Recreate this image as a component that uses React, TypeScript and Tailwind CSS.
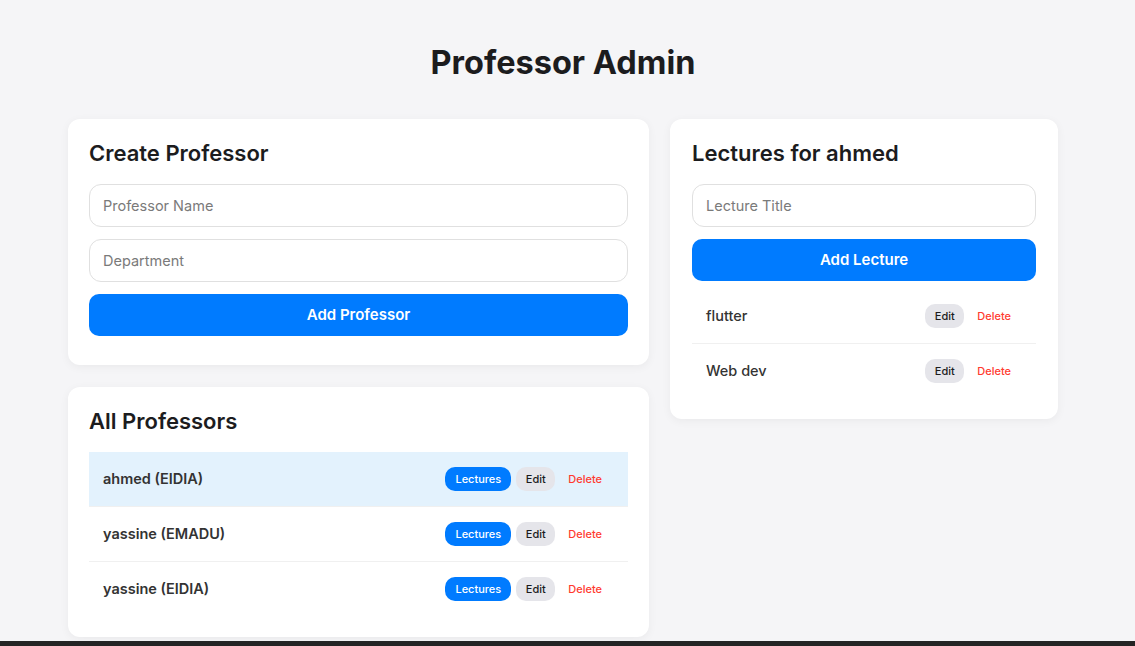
import { useState } from "react";

type Professor = { id: number; name: string; department: string };
type Lecture = { id: number; title: string };

const professors: Professor[] = [
  { id: 1, name: "ahmed", department: "EIDIA" },
  { id: 2, name: "yassine", department: "EMADU" },
  { id: 3, name: "yassine", department: "EIDIA" },
];

const lectures: Lecture[] = [
  { id: 1, title: "flutter" },
  { id: 2, title: "Web dev" },
];

function Card({ title, children, wide }: { title: string; children: React.ReactNode; wide?: boolean }) {
  return (
    <div
      className={
        "rounded-[12px] bg-white pt-[20px] pb-[21px] shadow-[0_2px_10px_rgba(0,0,0,0.05)] " +
        (wide ? "px-[21px]" : "px-[22px]")
      }
    >
      <h2 className="mb-[17px] text-[22px] font-semibold leading-[28px] text-[#1c1c1e]">{title}</h2>
      {children}
    </div>
  );
}

function TextInput({ placeholder }: { placeholder: string }) {
  return (
    <input
      placeholder={placeholder}
      className="h-[43px] w-full rounded-[12px] border border-[#e0e0e0] bg-white px-[13px] text-[14.5px] text-[#1c1c1e] outline-none placeholder:text-[#7a7a7a]"
    />
  );
}

function PrimaryButton({ label }: { label: string }) {
  return (
    <button className="h-[42px] w-full rounded-[10px] bg-[#007bff] text-[15px] font-semibold text-white">
      {label}
    </button>
  );
}

function SmallActions({ withLectures }: { withLectures?: boolean }) {
  return (
    <div className="flex items-center gap-[5px]">
      {withLectures && (
        <button className="h-[24px] rounded-[10px] bg-[#007bff] px-[10px] text-[11px] font-medium text-white">
          Lectures
        </button>
      )}
      <button className="h-[24px] w-[39px] rounded-[10px] bg-[#e5e5ea] text-[11px] font-medium text-[#1c1c1e]">
        Edit
      </button>
      <button className="h-[24px] px-[8px] text-[11px] font-medium text-[#ff3b30]">Delete</button>
    </div>
  );
}

export default function App() {
  const [selected] = useState(1);

  return (
    <div className="flex h-screen flex-col bg-[#f5f5f7]" style={{ fontFamily: "Inter, 'Noto Sans', sans-serif" }}>
      <div className="flex-1 overflow-hidden pt-[44px]">
        <h1 className="mb-[37px] pr-[9px] text-center text-[32.5px] font-bold leading-[38px] text-[#1c1c1e]">
          Professor Admin
        </h1>

        <div className="ml-[68px] grid w-[990px] grid-cols-[581px_388px] items-start gap-[21px]">
          <div className="flex flex-col gap-[22px]">
            <Card title="Create Professor" wide>
              <div className="mb-[8px] flex flex-col gap-[12px]">
                <TextInput placeholder="Professor Name" />
                <TextInput placeholder="Department" />
                <PrimaryButton label="Add Professor" />
              </div>
            </Card>

            <Card title="All Professors" wide>
              <ul>
                {professors.map((p, i) => (
                  <li
                    key={p.id}
                    className={
                      "flex items-center justify-between pl-[14px] pr-[18px] " +
                      (i < professors.length - 1 ? "h-[55px] border-b border-[#f0f0f0] " : "h-[54px] ") +
                      (p.id === selected ? "bg-[#e3f2fd]" : "")
                    }
                  >
                    <span className="text-[14.5px] font-semibold text-[#333333]">
                      {p.name} ({p.department})
                    </span>
                    <SmallActions withLectures />
                  </li>
                ))}
              </ul>
            </Card>
          </div>

          <Card title="Lectures for ahmed">
            <div className="mb-[8px] flex flex-col gap-[12px]">
              <TextInput placeholder="Lecture Title" />
              <PrimaryButton label="Add Lecture" />
            </div>
            <ul>
              {lectures.map((l, i) => (
                <li
                  key={l.id}
                  className={
                    "flex items-center justify-between pl-[14px] pr-[17px] " +
                    (i < lectures.length - 1 ? "h-[55px] border-b border-[#f0f0f0]" : "h-[54px]")
                  }
                >
                  <span className="text-[14.5px] font-medium text-[#333333]">{l.title}</span>
                  <SmallActions />
                </li>
              ))}
            </ul>
          </Card>
        </div>
      </div>
      <div className="h-[5px] bg-[#242424]" />
    </div>
  );
}
